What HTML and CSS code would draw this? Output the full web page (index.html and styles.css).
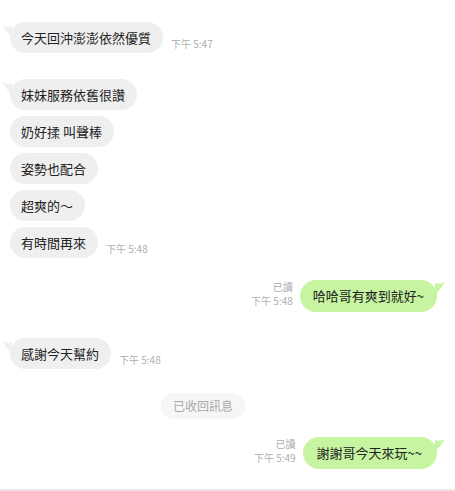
FILE: index.html
```html
<!DOCTYPE html>
<html>
<head>
<meta charset="utf-8">
<title>聊天記錄</title>
<link rel="stylesheet" href="styles.css">
</head>
<body>
<div class="chat">
	<div class="row in first">
		<div class="bubble tail"><svg class="tl" width="10" height="14" viewBox="0 0 10 14"><path d="M0 1 Q5 4 10 2 L10 14 Q5 9 0 1 Z" fill="#efefef"/></svg>今天回沖澎澎依然優質</div>
		<span class="time">下午 5:47</span>
	</div>

	<div class="group">
		<div class="row in">
			<div class="bubble tail"><svg class="tl" width="10" height="14" viewBox="0 0 10 14"><path d="M0 1 Q5 4 10 2 L10 14 Q5 9 0 1 Z" fill="#efefef"/></svg>妹妹服務依舊很讚</div>
		</div>
		<div class="row in"><div class="bubble">奶好揉 叫聲棒</div></div>
		<div class="row in"><div class="bubble">姿勢也配合</div></div>
		<div class="row in"><div class="bubble">超爽的～</div></div>
		<div class="row in">
			<div class="bubble">有時間再來</div>
			<span class="time">下午 5:48</span>
		</div>
	</div>

	<div class="row out r1">
		<div class="meta"><span>已讀</span><span>下午 5:48</span></div>
		<div class="bubble tail">哈哈哥有爽到就好~<svg class="tr" width="10" height="14" viewBox="0 0 10 14"><path d="M10 1 Q5 4 0 2 L0 14 Q5 9 10 1 Z" fill="#c6f4a0"/></svg></div>
	</div>

	<div class="row in r2">
		<div class="bubble tail"><svg class="tl" width="10" height="14" viewBox="0 0 10 14"><path d="M0 1 Q5 4 10 2 L10 14 Q5 9 0 1 Z" fill="#efefef"/></svg>感謝今天幫約</div>
		<span class="time">下午 5:48</span>
	</div>

	<div class="notice"><span>已收回訊息</span></div>

	<div class="row out r3">
		<div class="meta"><span>已讀</span><span>下午 5:49</span></div>
		<div class="bubble tail">謝謝哥今天來玩~~<svg class="tr" width="10" height="14" viewBox="0 0 10 14"><path d="M10 1 Q5 4 0 2 L0 14 Q5 9 10 1 Z" fill="#c6f4a0"/></svg></div>
	</div>
</div>
<div class="bottom"></div>
</body>
</html>
```

FILE: styles.css
```css
*{margin:0;padding:0;box-sizing:border-box;}
html,body{height:100%;}
body{background:#fff;font-family:"Noto Sans CJK TC","Liberation Sans",sans-serif;color:#222;display:flex;flex-direction:column;}

.chat{flex:1;padding-top:22px;}

/** 訊息列 **/
.row{display:flex;align-items:flex-end;}
.row.in{padding-left:10px;}
.row.out{padding-right:18px;justify-content:flex-end;}
.group{margin-top:26px;}
.group .row+.row{margin-top:6px;}
.r1{margin-top:22px;}
.r2{margin-top:26px;}
.r3{margin-top:18px;}

.bubble{position:relative;height:31px;line-height:31px;padding:0 12px 0 11px;font-size:13px;background:#efefef;border-radius:16px;white-space:nowrap;}
.out .bubble{background:#c6f4a0;height:32px;line-height:32px;padding:0 13px 0 13px;}
.r3 .bubble{padding:0 15px 0 14px;}
.bubble .tl{position:absolute;left:-8px;top:2px;}
.bubble .tr{position:absolute;right:-8px;top:1px;}

.time{font-size:10px;color:#aeaeae;margin:0 0 3px 8px;line-height:12px;}
.meta{display:flex;flex-direction:column;align-items:flex-end;font-size:10px;color:#aeaeae;line-height:14px;margin:0 7px 4px 0;}

/** 收回提示 **/
.notice{margin-top:23px;padding-left:161px;}
.notice span{display:inline-block;height:26px;line-height:26px;padding:0 12px;font-size:12px;color:#a8a8a8;background:#f6f6f6;border-radius:13px;}

.bottom{height:2px;background:#e6e6e6;margin-top:auto;}
```
